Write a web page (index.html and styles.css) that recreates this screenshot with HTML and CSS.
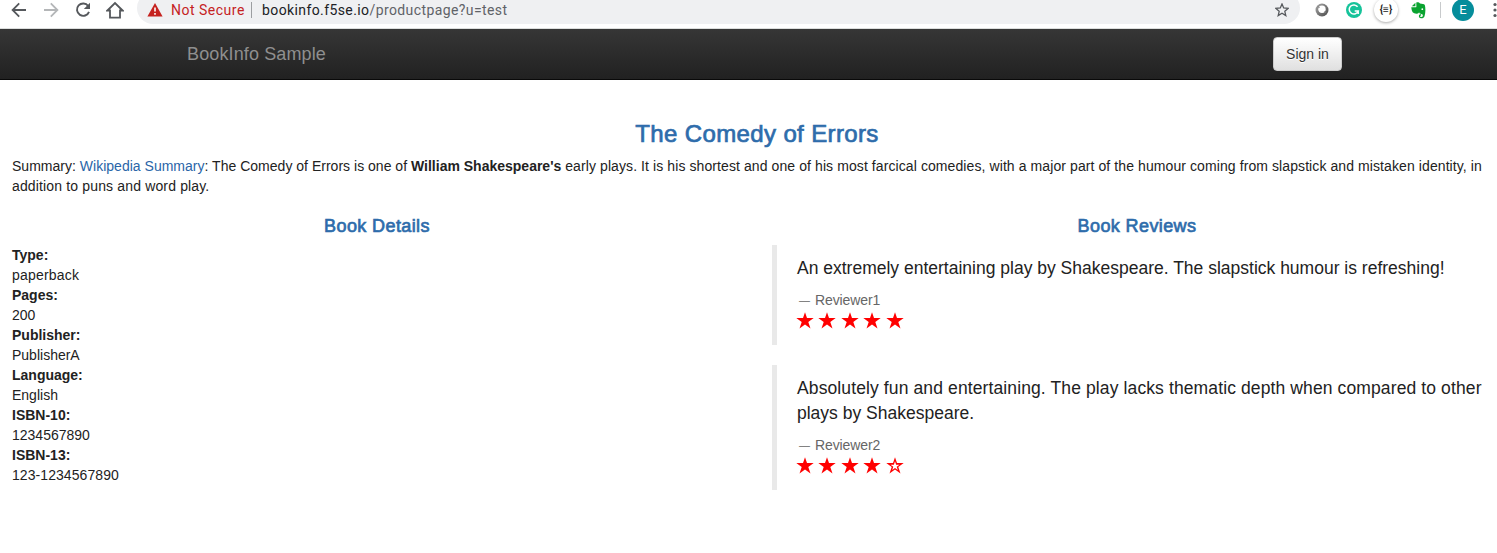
FILE: index.html
```html
<!DOCTYPE html>
<html lang="en">
<head>
<meta charset="utf-8">
<title>BookInfo Sample</title>
<link rel="stylesheet" href="styles.css">
</head>
<body>
<svg class="defs" width="0" height="0" aria-hidden="true">
  <symbol id="star" viewBox="0 0 18 17"><path d="M9 .2 11 6.1H17.700L12.300 10 14.500 16.500 9 12.600 3.500 16.500 5.700 10 .300 6.100H7Z" fill="#f00"/></symbol>
  <symbol id="star-empty" viewBox="0 0 18 17"><path fill-rule="evenodd" d="M9 .2 11 6.1H17.700L12.300 10 14.500 16.500 9 12.600 3.500 16.500 5.700 10 .300 6.100H7ZM9 4.300 7.900 7.700H4.500L7.300 9.700 6.200 13 9 11 11.800 13 10.700 9.700 13.500 7.700H10.100Z" fill="#f00"/></symbol>
</svg>
<div class="toolbar">
  <div class="nav-icons">
    <svg width="16" height="16" viewBox="0 0 16 16"><path d="M15 8H2M8.200 1.400 1.600 8l6.600 6.600" fill="none" stroke="#55585c" stroke-width="1.8"/></svg>
    <svg width="16" height="16" viewBox="0 0 16 16"><path d="M1 8h13M7.800 1.400 14.400 8l-6.600 6.600" fill="none" stroke="#b4b6b8" stroke-width="1.8"/></svg>
    <svg width="16" height="16" viewBox="0 0 16 16"><path d="M13.200 4A6.200 6.200 0 1 0 14 9.800" fill="none" stroke="#55585c" stroke-width="1.9"/><path d="M15 .8V7H8.800Z" fill="#55585c"/></svg>
    <svg class="home" width="18" height="18" viewBox="0 0 18 18"><path d="M1.400 9.500 9 2l7.600 7.500H14V16.600H4V9.500Z" fill="none" stroke="#55585c" stroke-width="1.8"/></svg>
  </div>
  <div class="address">
    <svg class="warning" width="16" height="14" viewBox="0 0 16 14"><path d="M8 0 15.600 13.500H.4Z" fill="#c5221f"/><path d="M8 4.600v4M8 10v1.800" stroke="#fff" stroke-width="1.6"/></svg>
    <span class="insecure">Not Secure</span>
    <span class="divider"></span>
    <span class="url"><b class="host">bookinfo.f5se.io</b><span class="path">/productpage?u=test</span></span>
    <svg class="bookmark" width="14" height="14" viewBox="0 0 14 14"><path d="m7 1 1.700 4 4.400.4-3.300 2.900 1 4.300L7 10.300l-3.800 2.300 1-4.300L.9 5.400 5.300 5Z" fill="none" stroke="#55585c" stroke-width="1.3"/></svg>
  </div>
  <div class="extensions">
    <svg width="14" height="14" viewBox="0 0 14 14"><defs><linearGradient id="ring" x2="1" y2="1"><stop stop-color="#aaa"/><stop offset="1" stop-color="#484848"/></linearGradient></defs><circle cx="7" cy="7" r="6.500" fill="url(#ring)"/><circle cx="7" cy="6.300" r="3.700" fill="#fff"/><path d="M3 3.500 4.500 5M11 10 9.500 8.500" stroke="#777"/></svg>
    <svg class="grammar" width="16" height="16" viewBox="0 0 16 16"><circle cx="8" cy="8" r="8" fill="#15c39a"/><path d="M11.600 4.800A4.600 4.600 0 1 0 12.200 9H8.700M12.200 8.500V12" fill="none" stroke="#fff" stroke-width="1.5"/></svg>
    <span class="json">{≡}</span>
    <svg class="elephant" width="15" height="17" viewBox="0 0 15 17"><path d="M4.400.8V4.200H.8ZM5.300.5C7 .1 8.400.6 9 1.500c2 .3 4.200.4 4.800 1.400.8 2.500.9 7.600-.3 11.300-.6 1.600-1.700 2.100-3.400 2-1.800 0-2.300-1.100-2.200-2.300.1-1.100.7-1.800 2.200-1.700v1.200c-.6 0-1 .2-1 .8s.4.8 1.200.7c1.300-.1 1.600-.6 1.500-1.700-.1-1-1-1.200-2.200-1.400-1-.2-1.300-.8-1.500-1.500-.4 1-1 1.500-2.500 1.400C2 11.500.7 10 .3 5.300H4.500c.6 0 .9-.3.9-.9Z" fill="#0aa330"/><circle cx="11.300" cy="7.200" r=".9" fill="#fff"/></svg>
    <span class="ext-divider"></span>
    <span class="avatar">E</span>
    <svg class="more" width="4" height="16" viewBox="0 0 4 16"><g fill="#55585c"><circle cx="2" cy="2.500" r="1.600"/><circle cx="2" cy="8" r="1.600"/><circle cx="2" cy="13.500" r="1.600"/></g></svg>
  </div>
</div>
<nav class="navbar"><a class="brand">BookInfo Sample</a><button class="signin">Sign in</button></nav>
<main class="container">
  <h3 class="title">The Comedy of Errors</h3>
  <p class="summary"><span class="intro">Summary: <a class="link">Wikipedia Summary</a>: The Comedy of Errors is one of </span><b>William Shakespeare's</b><span class="blurb"> early plays. It is his shortest and one of his most farcical comedies, with a major part of the humour coming from slapstick and mistaken identity, in</span><br><span class="blurb-end">addition to puns and word play.</span></p>
  <div class="columns">
    <section>
      <h4 class="subtitle">Book Details</h4>
      <dl class="details">
        <dt>Type:</dt><dd class="format">paperback</dd>
        <dt>Pages:</dt><dd>200</dd>
        <dt>Publisher:</dt><dd>PublisherA</dd>
        <dt>Language:</dt><dd>English</dd>
        <dt>ISBN-10:</dt><dd>1234567890</dd>
        <dt>ISBN-13:</dt><dd class="isbn">123-1234567890</dd>
      </dl>
    </section>
    <section>
      <h4 class="subtitle">Book Reviews</h4>
      <blockquote class="review">
        <p class="quote">An extremely entertaining play by Shakespeare. The slapstick humour is refreshing!</p>
        <small class="reviewer"><span class="dash">—</span>Reviewer1</small>
        <div class="stars"><svg><use href="#star"/></svg><svg><use href="#star"/></svg><svg><use href="#star"/></svg><svg><use href="#star"/></svg><svg><use href="#star"/></svg></div>
      </blockquote>
      <blockquote class="review">
        <p class="quote"><span class="wide">Absolutely fun and entertaining. The play lacks thematic depth when compared to other</span><br>plays by Shakespeare.</p>
        <small class="reviewer"><span class="dash">—</span>Reviewer2</small>
        <div class="stars"><svg><use href="#star"/></svg><svg><use href="#star"/></svg><svg><use href="#star"/></svg><svg><use href="#star"/></svg><svg><use href="#star-empty"/></svg></div>
      </blockquote>
    </section>
  </div>
</main>
</body>
</html>
```
FILE: styles.css
```css
* { box-sizing: border-box; }
body { margin: 0; height: 553px; overflow: hidden; background: #fff; color: #222; font: 14px/20px "Liberation Sans", Arial, sans-serif; }
svg { display: block; flex: none; }
.defs { position: absolute; }
.toolbar { display: flex; height: 29px; border-bottom: 1px solid #dcdedd; overflow: hidden; white-space: nowrap; }
.nav-icons { display: flex; flex: none; align-items: center; gap: 16px; width: 137px; height: 20px; padding-left: 11px; }
.home { margin-left: -1px; }
.address { display: flex; flex: none; align-items: center; width: 1163px; height: 32px; margin-top: -8px; padding: 4px 11px 0 10px; border-radius: 16px; background: #eff0f2; font: 14px/20px Roboto, sans-serif; }
.insecure { width: 76px; margin-left: 8px; color: #c5221f; letter-spacing: .5px; }
.divider { width: 1px; height: 16px; margin-left: 4px; background: #9c9ea1; }
.url { margin-left: 10px; letter-spacing: .4px; }
.host { font-weight: 400; color: #202124; }
.path { color: #5f6368; }
.bookmark { margin-left: auto; }
.extensions { display: flex; flex: none; align-items: center; height: 20px; margin-left: 15px; }
.grammar { margin-left: 17px; }
.json { flex: none; width: 24px; height: 24px; margin-left: 12px; border-radius: 50%; background: #fff; box-shadow: 0 1px 3px #aaa; color: #222; font: bold 10px/23px Roboto, sans-serif; text-align: center; }
.elephant { margin-left: 13px; }
.ext-divider { width: 1px; height: 16px; margin-left: 14px; background: #c8cacc; }
.avatar { flex: none; width: 22px; height: 22px; margin-left: 11px; border-radius: 50%; background: #058d9b; color: #fff; font: 13px/22px Roboto, sans-serif; text-align: center; }
.more { margin-left: 19px; }
.navbar { display: flex; align-items: center; justify-content: space-between; height: 51px; padding: 0 155px 1px 187px; border-bottom: 1px solid #090909; background: linear-gradient(#363636, #212121); }
.brand { font-size: 18px; line-height: 20px; color: #8f8f8f; letter-spacing: .12px; }
.signin { width: 69px; height: 34px; padding: 0; border: 1px solid #ccc; border-radius: 4px; background: linear-gradient(#fff, #e0e0e0); color: #333; font: 14px/20px "Liberation Sans", Arial, sans-serif; text-shadow: 0 1px 0 #fff; }
.container { width: 1490px; margin-left: 12px; padding-top: 41px; }
.title, .subtitle { color: #2e6cab; font-weight: 400; text-align: center; -webkit-text-stroke: .7px #2e6cab; }
.title { margin: 0 0 9px; font-size: 24px; line-height: 26px; letter-spacing: .37px; }
.summary { margin: 0; white-space: nowrap; }
.intro { letter-spacing: .015px; }
.blurb { letter-spacing: .09px; }
.blurb-end { letter-spacing: .15px; }
.link { color: #2a65a8; }
.columns { display: grid; grid-template-columns: 730px 730px; gap: 30px; padding-top: 20px; }
.subtitle { margin: 0 0 9px; font-size: 18px; line-height: 20px; letter-spacing: .4px; }
.details { margin: 0; }
.details dt { font-weight: 700; }
.details dd { margin: 0; }
.format { letter-spacing: .2px; }
.isbn { letter-spacing: .07px; }
.review { margin: 0 0 20px; padding: 11px 20px 10px; border-left: 5px solid #e9e9e9; }
.quote { margin: 0 0 9px; font-size: 17.5px; line-height: 25px; white-space: nowrap; }
.wide { letter-spacing: .115px; }
.reviewer { display: flex; height: 20px; font-size: 14px; line-height: 20px; color: #666; letter-spacing: -.1px; }
.dash { width: 18px; padding-left: 2px; font-size: 11px; }
.stars { display: flex; gap: 4.4px; height: 25px; margin-left: -1px; padding-top: 2px; }
.stars svg { width: 18px; height: 17px; }
```
